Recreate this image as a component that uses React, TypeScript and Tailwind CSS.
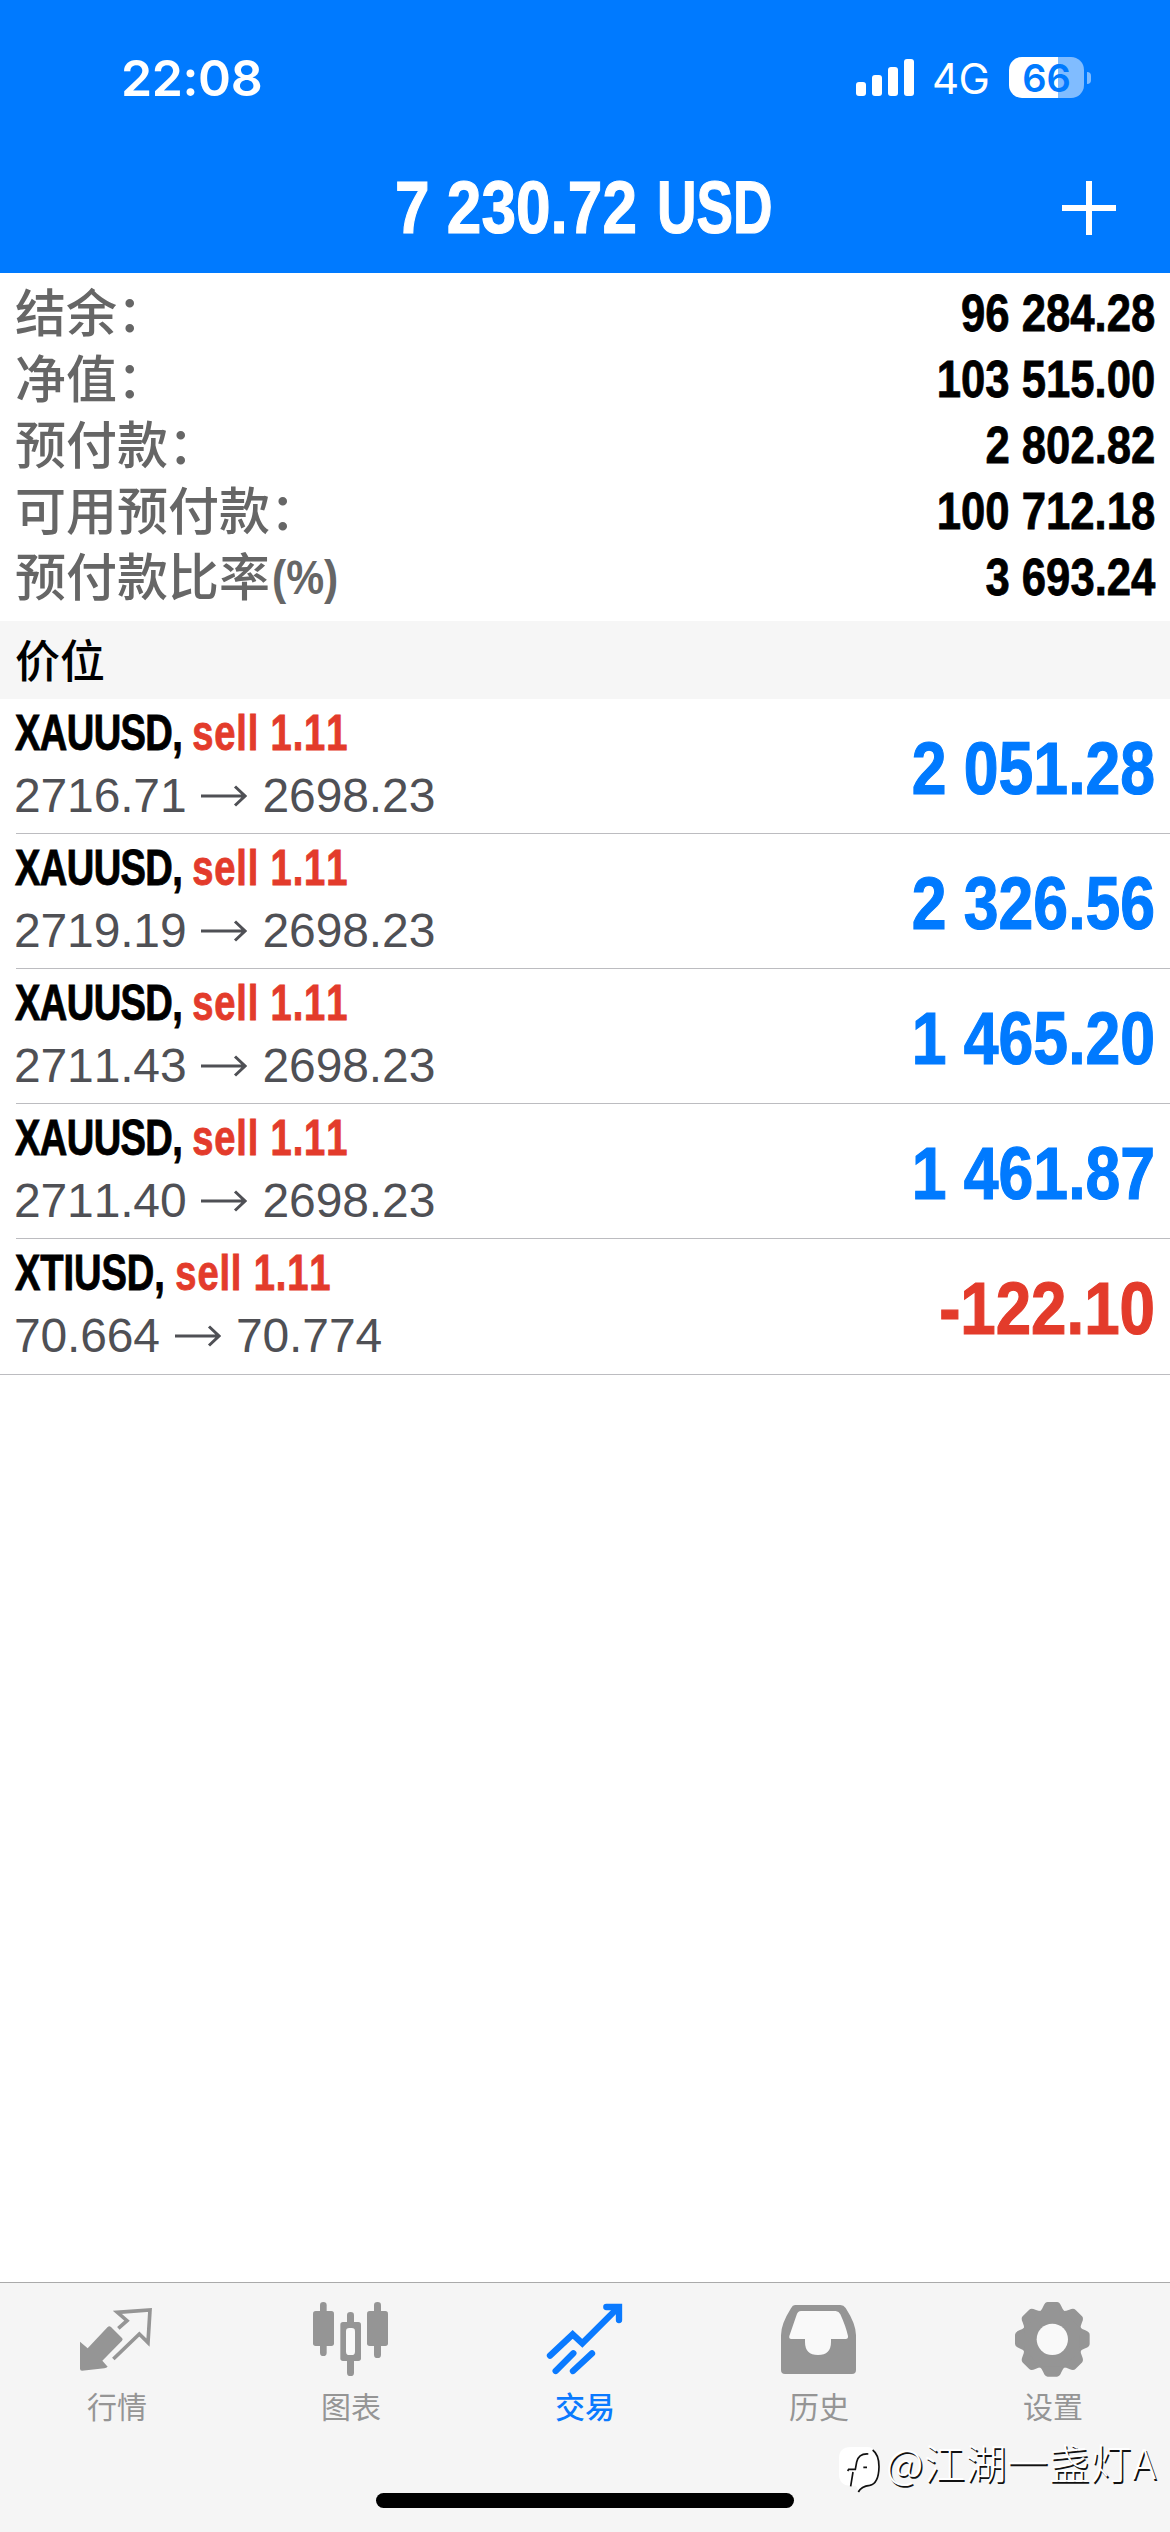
import type { ReactNode } from "react";

const summary = [
  { label: "结余：", value: "96 284.28" },
  { label: "净值：", value: "103 515.00" },
  { label: "预付款：", value: "2 802.82" },
  { label: "可用预付款：", value: "100 712.18" },
  { label: "预付款比率", suffix: "(%)", value: "3 693.24" },
];

const positions = [
  { symbol: "XAUUSD", side: "sell 1.11", open: "2716.71", current: "2698.23", profit: "2 051.28" },
  { symbol: "XAUUSD", side: "sell 1.11", open: "2719.19", current: "2698.23", profit: "2 326.56" },
  { symbol: "XAUUSD", side: "sell 1.11", open: "2711.43", current: "2698.23", profit: "1 465.20" },
  { symbol: "XAUUSD", side: "sell 1.11", open: "2711.40", current: "2698.23", profit: "1 461.87" },
  { symbol: "XTIUSD", side: "sell 1.11", open: "70.664", current: "70.774", profit: "-122.10" },
];

function StatusBar() {
  return (
    <div className="flex h-[155px] items-center pl-[121px] pr-[79px] font-['Inter',sans-serif] text-white">
      <span className="text-[50px] font-semibold leading-none tracking-[-0.4px]">22:08</span>

      <svg className="ml-auto h-[38px] w-[58px]" viewBox="0 0 58 38" fill="currentColor">
        <rect x="0" y="23" width="10" height="14" rx="3" />
        <rect x="16" y="16" width="10" height="21" rx="3" />
        <rect x="32" y="8" width="10" height="29" rx="3" />
        <rect x="48" y="0" width="10" height="37" rx="3" />
      </svg>
      <span className="ml-[18px] w-[58px] whitespace-nowrap text-[42px] leading-none tracking-[-0.6px] pt-[3px]">4G</span>

      <div className="ml-[19px] flex items-center gap-[3px]">
        <div className="flex h-[41px] w-[75px] items-center justify-center rounded-[13px] bg-[linear-gradient(90deg,#fff_66%,#80bcff_66%)] text-[38px] font-semibold leading-none text-[#007aff]">
          66
        </div>
        <div className="h-[12px] w-[4px] rounded-r-full bg-[#80bcff]" />
      </div>
    </div>
  );
}

function Header() {
  return (
    <header className="h-[273px] bg-[#007aff] text-white">
      <StatusBar />
      <div className="grid h-[105px] grid-cols-[1fr_380px_1fr] items-center">
        <div />
        <h1 className="flex whitespace-nowrap text-[74px] font-bold leading-none [-webkit-text-stroke:1.2px_currentColor]">
          <span className="block w-[262px]">
            <span className="block w-max origin-left scale-x-[0.84]">7 230.72</span>
          </span>
          <span className="block w-max origin-left scale-x-[0.74]">USD</span>
        </h1>
        <svg className="mr-[54px] h-[54px] w-[54px] justify-self-end" viewBox="0 0 54 54" stroke="currentColor" strokeWidth="6">
          <path d="M27 0V54M0 27H54" />
        </svg>
      </div>
    </header>
  );
}

function Summary() {
  return (
    <section className="h-[348px] pl-[15px] pr-[15px] pt-[7px]">
      {summary.map((row) => (
        <div key={row.label} className="flex h-[66px] items-center justify-between">
          <span className="flex h-[66px] items-start whitespace-nowrap font-['Noto_Sans_CJK_SC',sans-serif] text-[51px] font-medium leading-[60px] text-[#666]">
            {row.label}
            {row.suffix && (
              <span className="ml-[2px] origin-left scale-x-[0.87] font-['Liberation_Sans',sans-serif] text-[49px] font-bold leading-[66px]">
                {row.suffix}
              </span>
            )}
          </span>
          <span className="origin-right scale-x-[0.84] text-[52px] font-bold leading-[66px] [-webkit-text-stroke:0.8px_currentColor]">
            {row.value}
          </span>
        </div>
      ))}
    </section>
  );
}

function PositionRow({ item, last }: { item: (typeof positions)[number]; last: boolean }) {
  const loss = item.profit.startsWith("-");

  return (
    <div className={last ? "h-[136px] border-b border-[#bcbcc0]" : "h-[135px] pl-4"}>
      <div
        className={
          last
            ? "flex h-full items-center justify-between pl-4 pr-[15px]"
            : "flex h-full items-center justify-between border-b border-[#bcbcc0] pr-[15px]"
        }
      >
        <div className="-ml-px h-full pt-[2px]">
          <div className="w-max origin-left scale-x-[0.77] whitespace-pre text-[49.5px] font-bold leading-[63px] [-webkit-text-stroke:0.9px_currentColor]">
            <span className={item.symbol === "XTIUSD" ? "tracking-[-0.1px]" : "tracking-[-0.8px]"}>{item.symbol}, </span>
            <span className="tracking-[1.1px] text-[#e33b2b]">{item.side}</span>
          </div>
          <div className="flex items-center text-[48px] leading-[63px] text-[#4f5055]">
            <span className="-ml-px tracking-[-0.15px]">{item.open}</span>
            <svg className="ml-[15px] mr-[15px] h-[22px] w-[46px]" viewBox="0 0 46 22" fill="none" stroke="currentColor" strokeWidth="3">
              <path d="M0 11H44M34 1.5L44 11L34 20.5" />
            </svg>
            <span className="tracking-[-0.1px]">{item.current}</span>
          </div>
        </div>
        <span
          className={
            loss
              ? "mt-[5px] origin-right scale-x-[0.86] text-[74px] font-bold leading-none text-[#e33b2b] [-webkit-text-stroke:1.2px_currentColor]"
              : "mt-[5px] origin-right scale-x-[0.845] text-[74px] font-bold leading-none text-[#007aff] [-webkit-text-stroke:1.2px_currentColor]"
          }
        >
          {item.profit}
        </span>
      </div>
    </div>
  );
}

function QuotesIcon() {
  return (
    <>
      <path d="M15 137L38 157L98 93Q103 88 108 93L141 126Q145 130 141 134L82 194L98 212Q94 216 88 217L21 224Q15 224 15 218Z" />
      <path d="M130 97L156 74L127 49L225 42L219 140L193 114L115 189" fill="none" stroke="currentColor" strokeWidth="11" />
    </>
  );
}

function ChartIcon() {
  return (
    <>
      <rect x="33" y="18" width="20" height="162" rx="10" />
      <rect x="12" y="45" width="63" height="105" rx="8" />
      <rect x="114" y="48" width="21" height="192" rx="10" />
      <rect x="94" y="78" width="62" height="117" rx="8" />
      <rect x="111" y="96" width="27" height="81" rx="10" fill="#f9f9f9" />
      <rect x="195" y="18" width="21" height="168" rx="10" />
      <rect x="174" y="45" width="63" height="105" rx="8" />
    </>
  );
}

function TradeIcon() {
  return (
    <g fill="none" stroke="currentColor" strokeWidth="19" strokeLinecap="round">
      <path d="M21 179L89 115L118 142L224 36" />
      <path d="M190 33H228V72" />
      <path d="M38 225L91 172M90 225L147 172" />
    </g>
  );
}

function HistoryIcon() {
  return (
    <>
      <path d="M54 27H190Q200 27 206 36Q237 84 237 118V222Q237 234 225 234H24Q12 234 12 222V118Q12 84 42 37Q47 27 54 27Z" />
      <path d="M72 45H176Q186 46 190 55Q206 90 213 120Q214 129 206 129H162V138Q162 177 123 177Q84 177 84 138V129H43Q35 129 37 120L59 56Q62 46 72 45Z" fill="#f9f9f9" />
    </>
  );
}

function SettingsIcon() {
  return (
    <g transform="translate(124 130)">
      <circle r="91" />
      {[0, 45, 90, 135, 180, 225, 270, 315].map((angle) => (
        <path
          key={angle}
          transform={`rotate(${angle})`}
          d="M-38 -82Q-31 -88 -27 -99Q-22 -112 -14 -112H14Q22 -112 27 -99Q31 -88 38 -82Z"
        />
      ))}
      <circle r="47" fill="#f9f9f9" />
    </g>
  );
}

function Tab({ label, active, children }: { label: string; active?: boolean; children: ReactNode }) {
  return (
    <div
      className={
        active
          ? "flex flex-1 flex-col items-center text-[#0a7aff]"
          : "flex flex-1 flex-col items-center text-[#959595]"
      }
    >
      <svg className="h-[84px] w-[84px]" viewBox="0 0 252 252" fill="currentColor">
        {children}
      </svg>
      <span
        className={
          active
            ? "mt-[2px] font-['Noto_Sans_CJK_SC',sans-serif] text-[30px] font-medium leading-[46px]"
            : "mt-[2px] font-['Noto_Sans_CJK_SC',sans-serif] text-[30px] leading-[46px]"
        }
      >
        {label}
      </span>
    </div>
  );
}

function Watermark() {
  return (
    <div className="absolute left-[838px] top-[2437px] flex items-start">
      <svg className="mt-[9px] h-[48px] w-[43px]" viewBox="0 0 129 144" fill="none" stroke="#111" strokeWidth="5">
        <path d="M38 3H88Q122 3 122 60Q122 116 92 118Q70 120 62 136L54 119H38Q3 119 3 84V38Q3 3 38 3Z" fill="#fff" stroke="none" />
        <path d="M104 12Q123 26 123 62Q122 113 95 118Q70 121 61 138" />
        <path d="M91 24Q62 22 56 48L52 70H32L29 75M45 78L38 121M76 64H87" />
      </svg>
      <span className="ml-[5px] whitespace-nowrap font-['Noto_Sans_CJK_SC',sans-serif] text-[41px] font-light leading-[48px] tracking-[0.6px] text-white [text-shadow:1.5px_1.5px_0_#111]">
        @江湖一盏灯A
      </span>
    </div>
  );
}

export default function App() {
  return (
    <main className="relative flex h-[2532px] w-[1170px] flex-col overflow-hidden bg-white font-['Liberation_Sans',Arial,sans-serif] text-black [font-kerning:none]">
      <Header />
      <Summary />

      <h2 className="h-[78px] bg-[#f6f6f6] pl-[15px] font-['Noto_Sans_CJK_SC',sans-serif] text-[45px] font-medium leading-[75px]">
        价位
      </h2>

      <section>
        {positions.map((item, i) => (
          <PositionRow key={i} item={item} last={i === positions.length - 1} />
        ))}
      </section>

      <nav className="mt-auto flex h-[250px] flex-col border-t border-[#aaa] bg-[#f5f5f5] pt-[13px]">
        <div className="flex">
          <Tab label="行情">
            <QuotesIcon />
          </Tab>
          <Tab label="图表">
            <ChartIcon />
          </Tab>
          <Tab label="交易" active>
            <TradeIcon />
          </Tab>
          <Tab label="历史">
            <HistoryIcon />
          </Tab>
          <Tab label="设置">
            <SettingsIcon />
          </Tab>
        </div>
        <div className="mx-auto mb-[24px] mt-auto h-[15px] w-[418px] rounded-full bg-black" />
      </nav>

      <Watermark />
    </main>
  );
}
